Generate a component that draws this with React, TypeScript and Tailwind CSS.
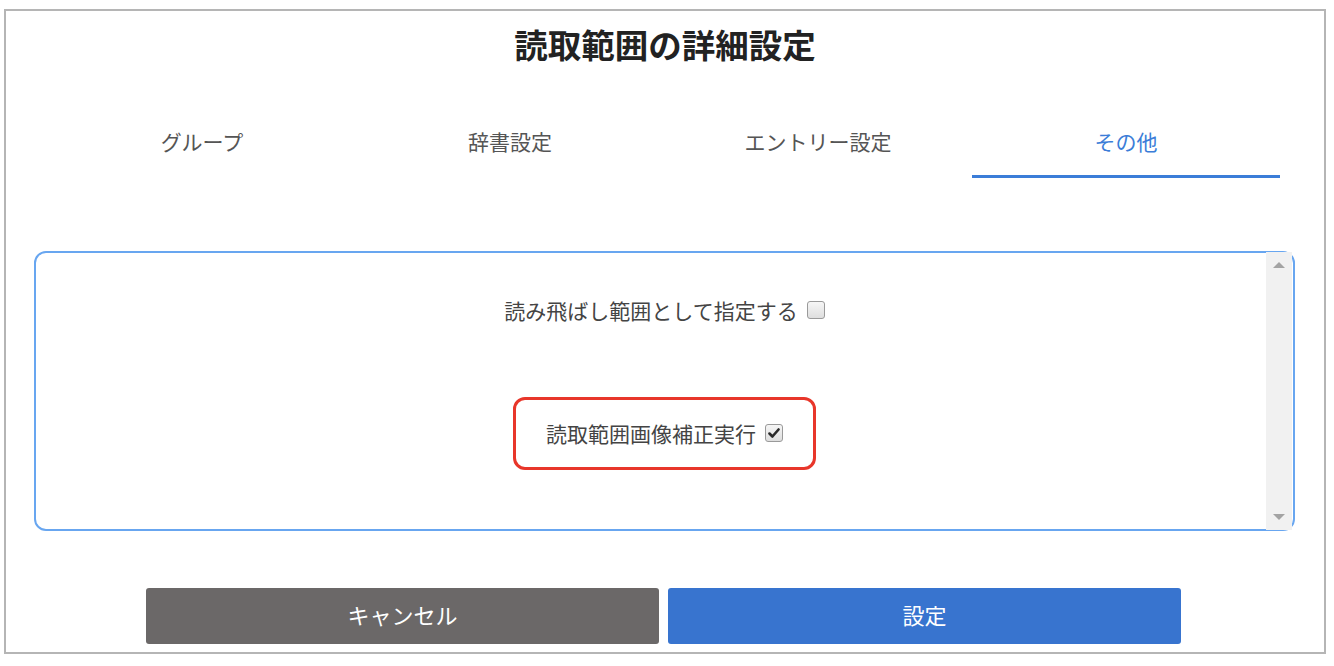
import { FC } from 'react';

const font = { fontFamily: '"Noto Sans CJK JP", "Noto Sans", sans-serif' };

const tabs = ['グループ', '辞書設定', 'エントリー設定', 'その他'];

const Checkbox: FC<{ checked?: boolean }> = ({ checked }) => (
  <span className="ml-[9px] inline-flex h-[18px] w-[18px] items-center justify-center rounded-[3px] border border-[#9a9a9a] bg-gradient-to-b from-[#f6f6f6] to-[#dedede]">
    {checked && (
      <svg viewBox="0 0 16 16" className="h-[14px] w-[14px]">
        <path d="M2.8 8.6 L6.2 12 L13.2 4" fill="none" stroke="#2a2a2a" strokeWidth="3" strokeLinecap="round" strokeLinejoin="round" />
      </svg>
    )}
  </span>
);

const App: FC = () => {
  return (
    <div className="h-[666px] w-[1334px] overflow-hidden bg-white pt-[9px] pl-[4px]" style={font}>
      <div className="h-[645px] w-[1322px] border-2 border-[#b5b5b5]">
        <h1 className="pt-[13px] pb-[1px] text-center text-[33.5px] font-bold leading-[40px] text-[#222]">
          読取範囲の詳細設定
        </h1>

        <div className="mt-[45px] ml-[42px] grid w-[1232px] grid-cols-4">
          {tabs.map((t, i) => (
            <div
              key={t}
              className={
                i === 3
                  ? 'flex h-[68px] items-center justify-center border-b-[3px] border-[#3b7dd8] pb-[2px] text-[21px] text-[#3b7dd8]'
                  : 'flex h-[68px] items-center justify-center border-b-[3px] border-transparent pb-[2px] text-[21px] text-[#555]'
              }
            >
              {t}
            </div>
          ))}
        </div>

        <div className="relative mt-[73px] ml-[28px] flex h-[280px] w-[1261px] flex-col items-center rounded-[12px] border-2 border-[#68a6f0]">
          <div className="mt-[42px] flex items-center text-[21px] leading-[30px] text-[#444]">
            読み飛ばし範囲として指定する
            <Checkbox />
          </div>

          <div className="mt-[72px] flex h-[73px] w-[303px] items-center justify-center rounded-[12px] border-[3px] border-[#e8362a] pb-[2px] text-[21px] leading-[30px] text-[#444]">
            読取範囲画像補正実行
            <Checkbox checked />
          </div>

          {/* scrollbar */}
          <div className="absolute top-[-1px] right-[1px] bottom-[-1px] flex w-[26px] flex-col items-center justify-between bg-[#f1f1f1] py-[10px]">
            <span className="h-0 w-0 border-x-[6px] border-b-[6px] border-x-transparent border-b-[#a3a3a3]" />
            <span className="h-0 w-0 border-x-[6px] border-t-[6px] border-x-transparent border-t-[#a3a3a3]" />
          </div>
        </div>

        <div className="mt-[57px] ml-[140px] flex gap-[9px]">
          <button className="h-[56px] w-[513px] rounded-[3px] bg-[#6b6868] pb-[4px] text-[22px] text-white">
            キャンセル
          </button>
          <button className="h-[56px] w-[513px] rounded-[3px] bg-[#3874cf] pb-[4px] text-[22px] text-white">
            設定
          </button>
        </div>
      </div>
    </div>
  );
};

export default App;
